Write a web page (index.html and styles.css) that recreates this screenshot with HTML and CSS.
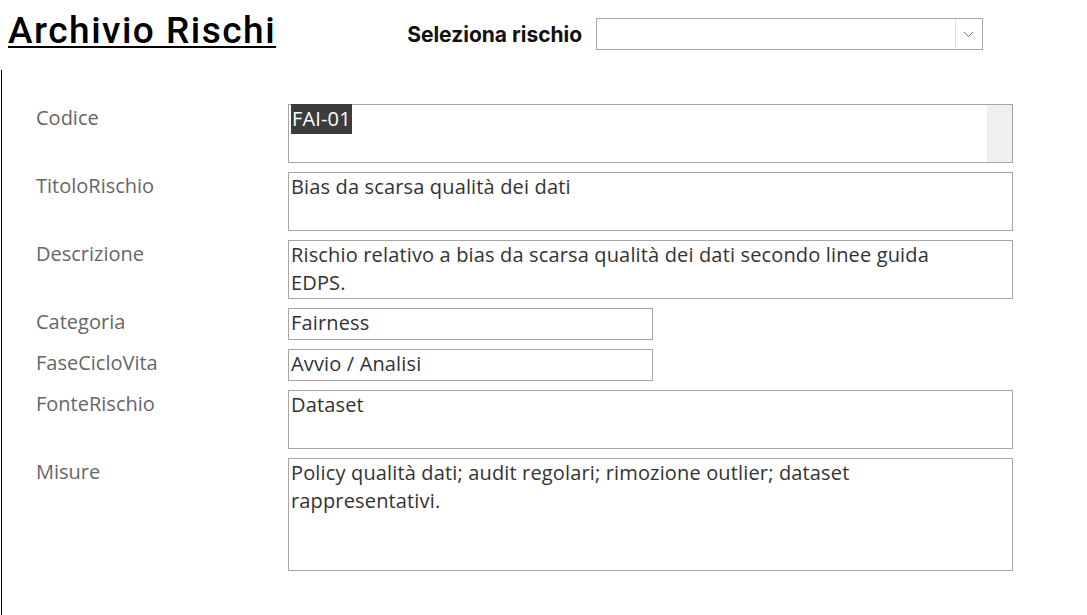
FILE: index.html
```html
<!DOCTYPE html>
<html lang="it">
<head>
    <meta charset="UTF-8">
    <meta name="viewport" content="width=device-width, initial-scale=1.0">
    <title>Archivio Rischi</title>
    <link rel="stylesheet" href="styles.css">
</head>
<body>
    <header class="testata">
        <h1 class="titolo">Archivio Rischi</h1>
        <div class="selettore">
            <label for="rischio">Seleziona rischio</label>
            <div class="combo" id="rischio">
                <span class="combo-valore"></span>
                <span class="combo-freccia">
                    <svg width="11" height="7" viewBox="0 0 11 7"><path d="M1 1 L5.5 5.5 L10 1" fill="none" stroke="#777" stroke-width="1"/></svg>
                </span>
            </div>
        </div>
    </header>

    <main class="scheda">
        <div class="riga">
            <span class="etichetta">Codice</span>
            <div class="campo alto scroll"><span class="selezionato">FAI-01</span></div>
        </div>
        <div class="riga">
            <span class="etichetta">TitoloRischio</span>
            <div class="campo alto">Bias da scarsa qualità dei dati</div>
        </div>
        <div class="riga">
            <span class="etichetta">Descrizione</span>
            <div class="campo alto">Rischio relativo a bias da scarsa qualità dei dati secondo linee guida EDPS.</div>
        </div>
        <div class="riga">
            <span class="etichetta">Categoria</span>
            <div class="campo corto">Fairness</div>
        </div>
        <div class="riga">
            <span class="etichetta">FaseCicloVita</span>
            <div class="campo corto">Avvio / Analisi</div>
        </div>
        <div class="riga">
            <span class="etichetta">FonteRischio</span>
            <div class="campo alto">Dataset</div>
        </div>
        <div class="riga">
            <span class="etichetta">Misure</span>
            <div class="campo grande">Policy qualità dati; audit regolari; rimozione outlier; dataset rappresentativi.</div>
        </div>
    </main>
</body>
</html>
```

FILE: styles.css
```css
body {
    margin: 0;
    font-family: "Open Sans", sans-serif;
    background: #fff;
}

/* intestazione: titolo e scelta del rischio */
.testata {
    display: flex;
    align-items: center;
    height: 70px;
    padding-left: 8px;
}

.titolo {
    margin: 0 0 9px 0;
    font-family: Roboto, sans-serif;
    font-weight: 500;
    font-size: 37px;
    letter-spacing: 1.5px;
    text-decoration: underline;
    text-decoration-thickness: 2px;
    text-underline-offset: 3px;
    color: #000;
}

.selettore {
    display: flex;
    align-items: center;
    margin-left: 131px;
    margin-bottom: 2px;
}

.selettore label {
    font-family: "Inter", sans-serif;
    font-weight: 700;
    font-size: 21px;
    color: #111;
    margin-right: 14px;
}

.combo {
    display: flex;
    width: 385px;
    height: 30px;
    border: 1px solid #a6a6a6;
}

.combo-valore {
    flex: 1;
}

.combo-freccia {
    width: 25px;
    margin: 1px;
    border-left: 1px solid #e0e0e0;
    display: flex;
    align-items: center;
    justify-content: center;
}

/* scheda con i campi del rischio */
.scheda {
    border-left: 1px solid #000;
    margin-left: 1px;
    padding-top: 34px;
    height: 511px;
    display: flex;
    flex-direction: column;
    gap: 9px;
}

.riga {
    display: flex;
    align-items: flex-start;
}

.etichetta {
    width: 252px;
    padding-left: 34px;
    font-size: 20px;
    color: #666;
}

.campo {
    box-sizing: border-box;
    width: 725px;
    border: 1px solid #a6a6a6;
    padding: 0 40px 0 2px;
    font-size: 20px;
    letter-spacing: 0.15px;
    line-height: 28px;
    color: #333;
}

.alto {
    height: 59px;
}

.corto {
    width: 365px;
    height: 32px;
}

.grande {
    height: 113px;
}

.scroll {
    background: linear-gradient(to left, #efefef 25px, #fff 25px);
}

.selezionato {
    background: #3c3c3c;
    color: #fff;
    padding: 1px 1px 2px;
}
```
